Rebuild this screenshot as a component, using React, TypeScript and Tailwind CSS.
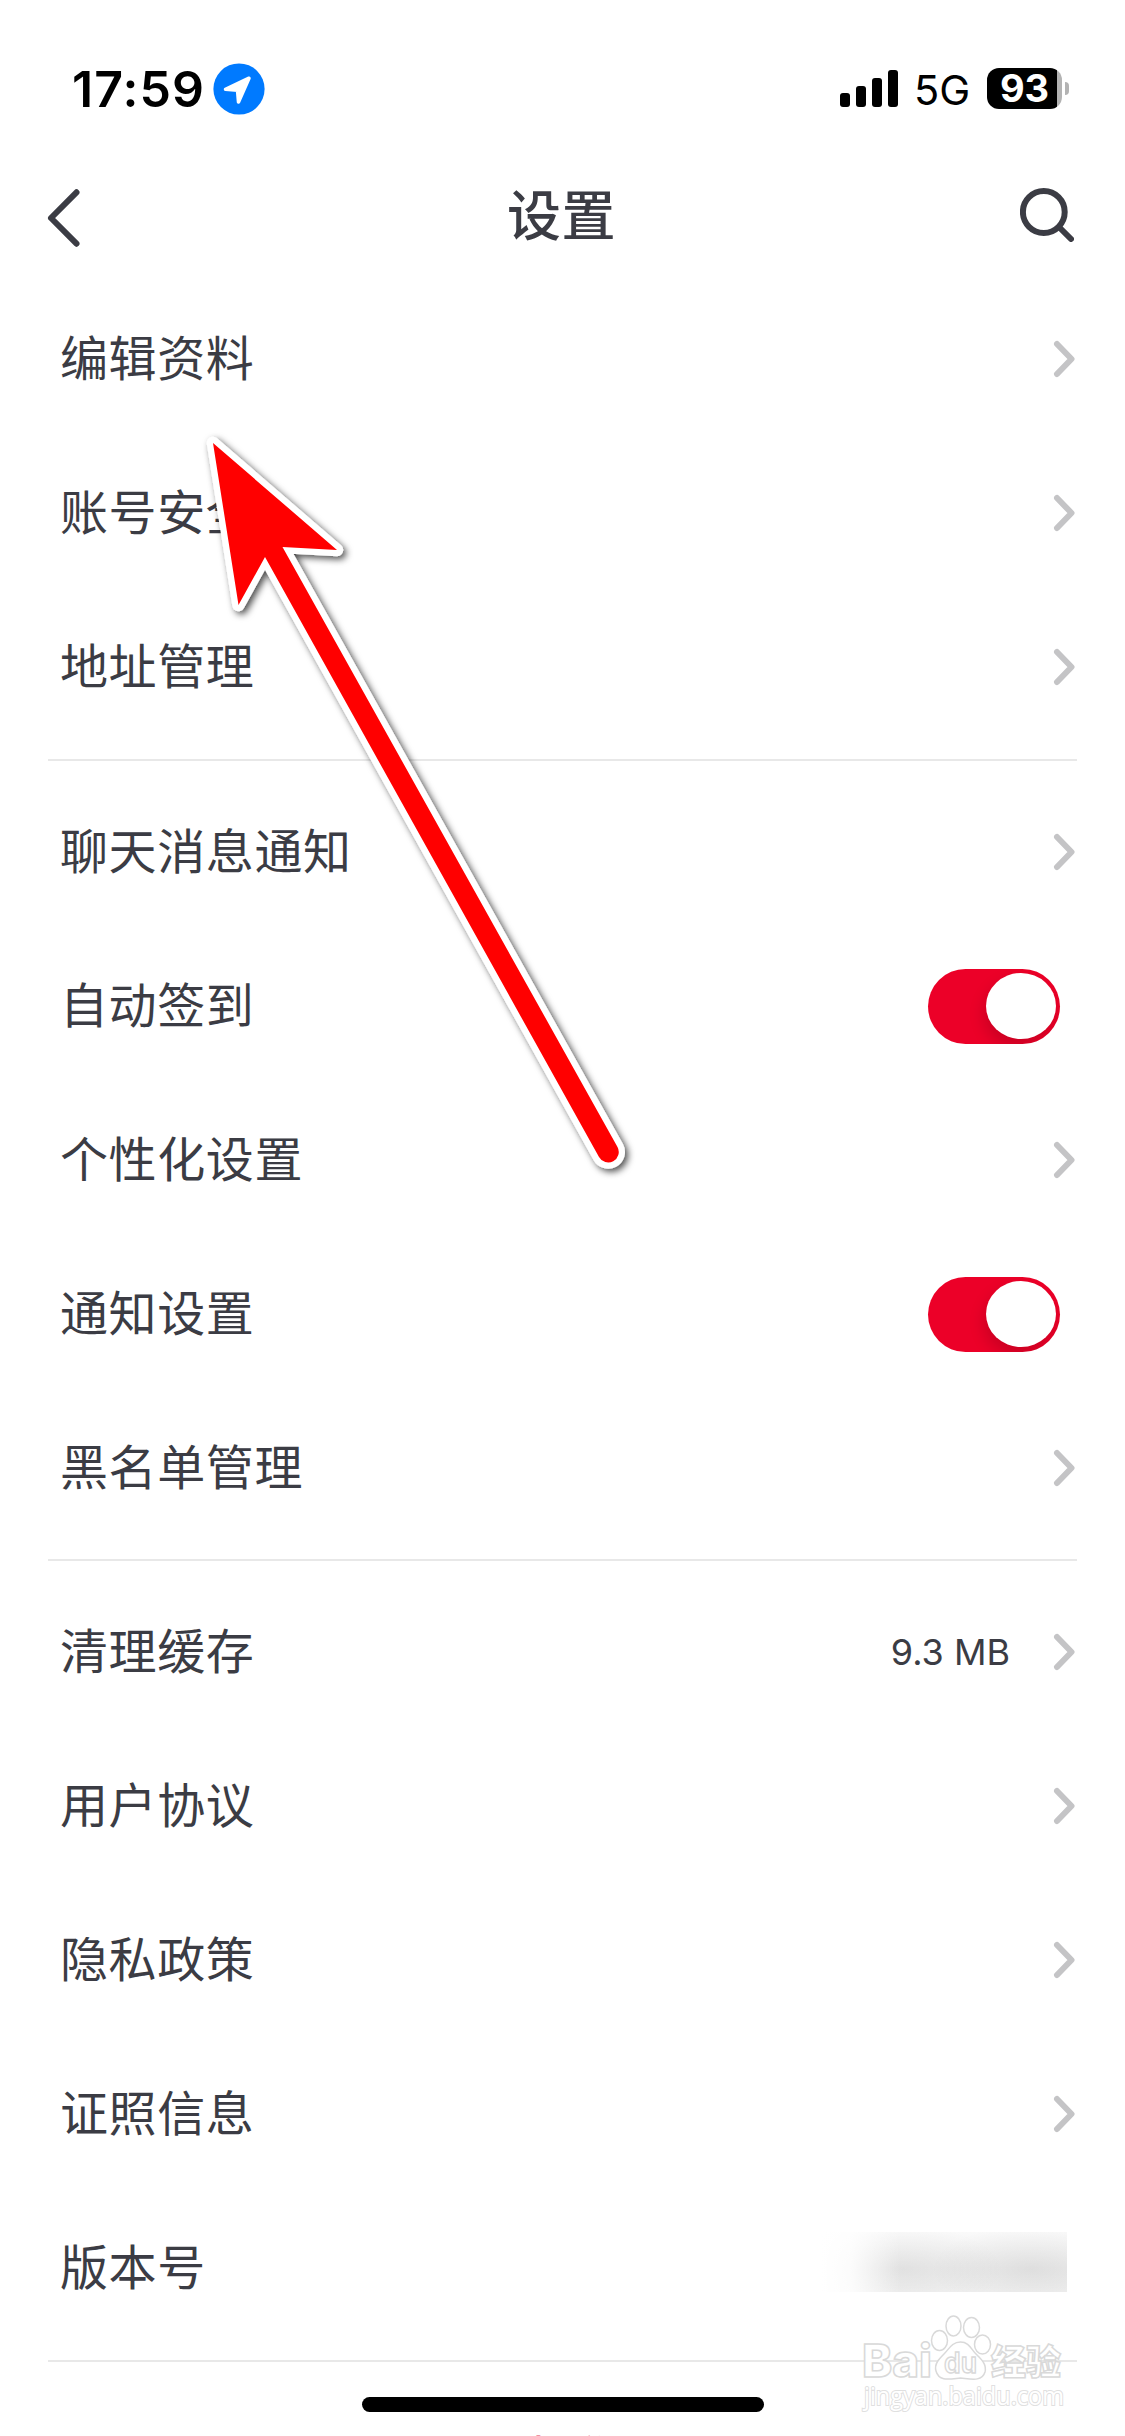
import React from "react";

type Row = { label: string; kind: "link" | "toggle" | "hidden"; value?: string };

const sections: Row[][] = [
  [
    { label: "编辑资料", kind: "link" },
    { label: "账号安全", kind: "link" },
    { label: "地址管理", kind: "link" },
  ],
  [
    { label: "聊天消息通知", kind: "link" },
    { label: "自动签到", kind: "toggle" },
    { label: "个性化设置", kind: "link" },
    { label: "通知设置", kind: "toggle" },
    { label: "黑名单管理", kind: "link" },
  ],
  [
    { label: "清理缓存", kind: "link", value: "9.3 MB" },
    { label: "用户协议", kind: "link" },
    { label: "隐私政策", kind: "link" },
    { label: "证照信息", kind: "link" },
    { label: "版本号", kind: "hidden" },
  ],
];

function StatusBar() {
  return (
    <div className="flex h-[152px] items-start justify-between pr-[56px] pl-[72px] text-black">
      <div className="flex items-center pt-[63px]">
        <span className="w-[141px] text-[50px] leading-[52px] font-semibold tracking-[1.1px] whitespace-nowrap">17:59</span>
        <svg width="52" height="52" viewBox="0 0 52 52">
          <circle cx="26" cy="26" r="25.6" fill="#007aff" />
          <path d="M12.500 26.300 L36 15.200 L25.500 39 L24.500 27.200 Z" fill="#fff" stroke="#fff" strokeWidth="3.5" strokeLinejoin="round" />
        </svg>
      </div>
      <div className="flex items-start pt-[68px]">
        <div className="mt-[2px] flex h-[37px] items-end gap-[6px]">
          <div className="h-[14px] w-[10px] rounded-[3px] bg-black" />
          <div className="h-[21px] w-[10px] rounded-[3px] bg-black" />
          <div className="h-[29px] w-[10px] rounded-[3px] bg-black" />
          <div className="h-[37px] w-[10px] rounded-[3px] bg-black" />
        </div>
        <span className="ml-[16px] w-[73px] text-[41.500px] leading-[44px] whitespace-nowrap">5G</span>
        <div className="h-[41px] w-[75px] rounded-[12px] bg-linear-to-r from-black from-[70px] to-[#b3b3b3] to-[70px] pl-[13px] text-[38px] leading-[41px] font-bold tracking-[-0.3px] text-white">
          93
        </div>
        <div className="mt-[14px] ml-[3px] h-[13px] w-[4px] rounded-r-full bg-[#b3b3b3]" />
      </div>
    </div>
  );
}

function Header() {
  return (
    <header className="flex h-[130px] items-center justify-between pr-[51px] pb-[2px] pl-[48px]">
      <svg className="overflow-visible" width="54" height="58" viewBox="0 0 54 58" fill="none" stroke="#3b3c44" strokeWidth="6" strokeLinecap="round" strokeLinejoin="round">
        <path d="M28.500 5.300 L3 31 L28.500 56.700" />
      </svg>
      <h1 className="pt-px pl-px text-[54px] leading-[60px] font-medium tracking-[0.6px]">设置</h1>
      <svg className="mb-[2px]" width="54" height="54" viewBox="0 0 54 54" fill="none" stroke="#3b3c44" strokeWidth="6" strokeLinecap="round">
        <circle cx="23.8" cy="24" r="20.9" />
        <path d="M39.500 39.500 L51 51" />
      </svg>
    </header>
  );
}

function Chevron() {
  return (
    <svg width="22" height="38" viewBox="0 0 22 38" fill="none" stroke="#c4c4c6" strokeWidth="6" strokeLinecap="round" strokeLinejoin="round">
      <path d="M4 4 L18.500 19 L4 34" />
    </svg>
  );
}

function Toggle() {
  return (
    <div className="mr-[17px] flex h-[75px] w-[132px] items-center justify-end overflow-hidden rounded-full bg-[#ec0028] pr-[4px]">
      <div className="h-[66px] w-[70px] rounded-[50%] bg-white shadow-[-2px_8px_16px_rgba(0,0,0,0.15)]" />
    </div>
  );
}

function SettingRow({ row }: { row: Row }) {
  return (
    <div className="flex h-[154px] items-center justify-between pl-[12px]">
      <span className="text-[48px] leading-[70px] tracking-[0.6px]">{row.label}</span>
      {row.kind === "link" && (
        <div className="flex items-center pr-[2px]">
          {row.value && <span className="mr-[43px] text-[36px] leading-[44px]">{row.value}</span>}
          <Chevron />
        </div>
      )}
      {row.kind === "toggle" && <Toggle />}
      {row.kind === "hidden" && (
        <div className="mr-[10px] mb-[12px] h-[60px] w-[246px] bg-[linear-gradient(to_right,#fff_0%,rgba(255,255,255,0.85)_12%,rgba(255,255,255,0)_32%),radial-gradient(ellipse_100px_44px_at_210px_37px,rgba(0,0,0,0.07),transparent),radial-gradient(ellipse_100px_44px_at_82px_37px,rgba(0,0,0,0.06),transparent),linear-gradient(to_bottom,#fafafa_0%,#efefef_60%,#f2f2f2_100%)]" />
      )}
    </div>
  );
}

function Arrow() {
  const shape =
    "M213 443 L337 550 L282.5 547 L617.5 1147 A10.3 10.3 0 0 1 599 1157 L265 557 L238.5 605 Z";
  return (
    <svg className="pointer-events-none absolute top-0 left-0" width="700" height="1250" viewBox="0 0 700 1250">
      <defs>
        <filter id="arrow-shadow" x="-10%" y="-10%" width="120%" height="120%">
          <feDropShadow dx="3" dy="3" stdDeviation="3.5" floodColor="#000" floodOpacity="0.7" />
        </filter>
      </defs>
      <path d={shape} fill="#fff" stroke="#fff" strokeWidth="12.5" strokeLinejoin="round" filter="url(#arrow-shadow)" />
      <path d={shape} fill="#ff0000" />
    </svg>
  );
}

function Watermark() {
  return (
    <svg className="pointer-events-none absolute top-[2310px] left-[855px] overflow-visible" width="220" height="110" viewBox="0 0 220 110" fill="#fff" stroke="#d9d9d9" strokeWidth="1.5">
      <g fontFamily="Inter, 'Noto Sans CJK SC', sans-serif" fontWeight="800">
        <text x="7" y="67" fontSize="45" textLength="70" lengthAdjust="spacingAndGlyphs">Bai</text>
        <ellipse cx="84.500" cy="30.500" rx="8" ry="10" />
        <ellipse cx="98.500" cy="16" rx="7.5" ry="10" />
        <ellipse cx="116.500" cy="17.500" rx="8" ry="10" />
        <ellipse cx="127.500" cy="34.500" rx="8" ry="9.5" />
        <path d="M105.500 32 C97 32 94 39 89 44 C84 49 79 54 81 61 C84 72 95 69 105.500 68 C116 69 127 72 130 62 C132 54 126 49 121 44 C116 39 114 32 105.500 32 Z" />
        <text x="89" y="63" fontSize="29" fontWeight="600" textLength="33" lengthAdjust="spacingAndGlyphs">du</text>
        <text x="136" y="65" fontSize="35" fontFamily="'Noto Sans CJK SC', sans-serif" textLength="70" lengthAdjust="spacingAndGlyphs">经验</text>
      </g>
      <text x="9" y="95" fontSize="25" fontFamily="'Open Sans', sans-serif" strokeWidth="2" stroke="#e0e0e0" paintOrder="stroke" textLength="200" lengthAdjust="spacingAndGlyphs">jingyan.baidu.com</text>
    </svg>
  );
}

export default function App() {
  return (
    <div className="relative h-[2436px] w-[1125px] overflow-hidden bg-white font-[Inter,'Noto_Sans_CJK_SC',sans-serif] text-[#3b3c44]">
      <StatusBar />
      <Header />
      <main className="px-[48px]">
        {sections.map((rows, i) => (
          <section key={i} className="mb-[14px] border-b-2 border-[#e8e8e8] pb-[14px] first:pb-[15px] last-of-type:pb-[15px]">
            {rows.map((row) => (
              <SettingRow key={row.label} row={row} />
            ))}
          </section>
        ))}
        <div className="mx-auto w-fit pt-[55px] text-[48px] leading-[56px] text-[#e0405a]">退出登录</div>
      </main>
      <Arrow />
      <Watermark />
      <div className="absolute bottom-[24px] left-[362px] h-[15px] w-[402px] rounded-full bg-black" />
    </div>
  );
}
